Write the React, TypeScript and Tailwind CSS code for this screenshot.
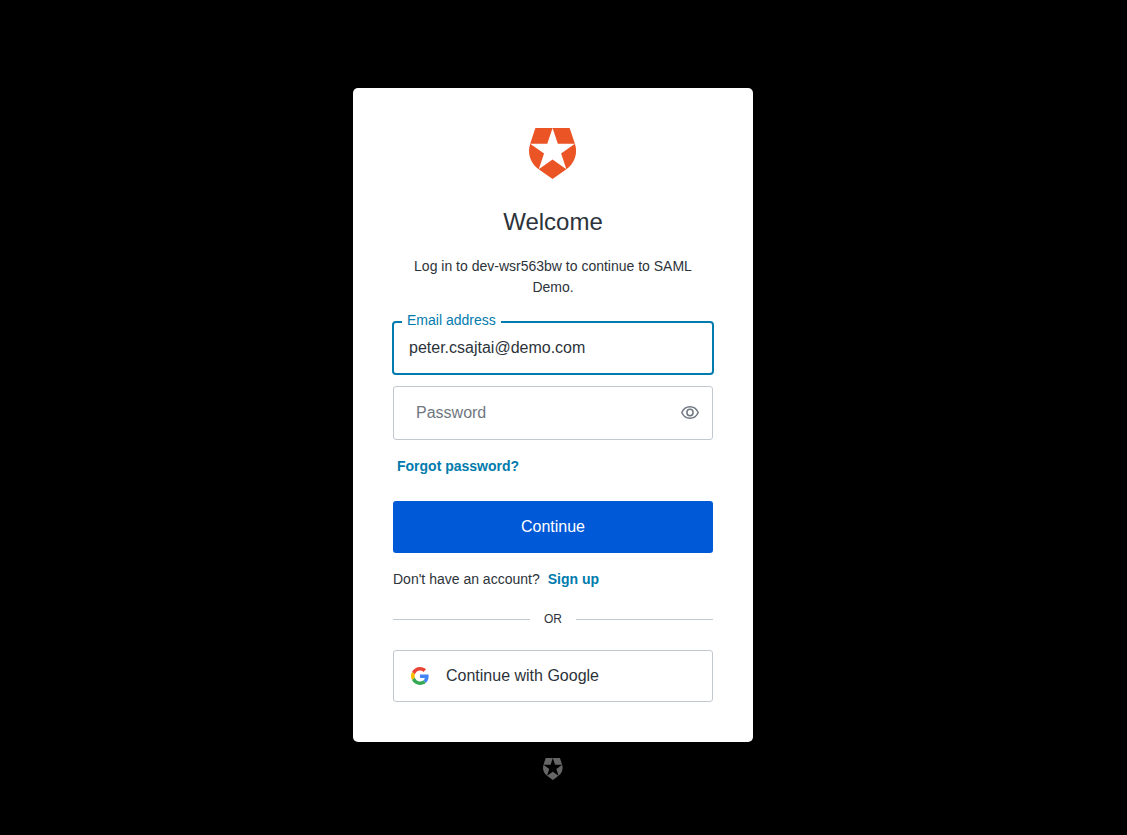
import { useState } from 'react';

interface ShieldLogoProps {
  className: string;
  label: string;
}

function ShieldLogo({ className, label }: ShieldLogoProps) {
  return (
    <svg role="img" aria-label={label} viewBox="1.5 0 21.4 24" preserveAspectRatio="none" fill="currentColor" className={className}>
      <path d="M21.98 7.448L19.62 0H4.347L2.02 7.448c-1.352 4.312.03 9.206 3.815 12.015L12.007 24l6.157-4.552c3.755-2.81 5.182-7.688 3.815-12.015l-6.16 4.58 2.343 7.45-6.157-4.597-6.158 4.58 2.358-7.433-6.188-4.55 7.63-.045L12.008 0l2.356 7.404 7.615.044z" />
    </svg>
  );
}

function GoogleIcon() {
  return (
    <svg aria-hidden="true" viewBox="0 0 48 48" className="size-[18px] shrink-0">
      <path fill="#EA4335" d="M24 9.5c3.54 0 6.71 1.22 9.21 3.6l6.85-6.85C35.9 2.38 30.47 0 24 0 14.62 0 6.51 5.38 2.56 13.22l7.98 6.19C12.43 13.72 17.74 9.5 24 9.5z" />
      <path fill="#4285F4" d="M46.98 24.55c0-1.57-.15-3.09-.38-4.55H24v9.02h12.94c-.58 2.96-2.26 5.48-4.78 7.18l7.73 6c4.51-4.18 7.09-10.36 7.09-17.65z" />
      <path fill="#FBBC05" d="M10.53 28.59c-.48-1.45-.76-2.99-.76-4.59s.27-3.14.76-4.59l-7.98-6.19C.92 16.46 0 20.12 0 24c0 3.88.92 7.54 2.56 10.78l7.97-6.19z" />
      <path fill="#34A853" d="M24 48c6.48 0 11.93-2.13 15.89-5.81l-7.73-6c-2.15 1.45-4.92 2.3-8.16 2.3-6.26 0-11.57-4.22-13.47-9.91l-7.98 6.19C6.51 42.62 14.62 48 24 48z" />
    </svg>
  );
}

function EyeIcon() {
  return (
    <svg aria-hidden="true" viewBox="0 0 18 14" fill="none" stroke="currentColor" strokeWidth="1.5" className="h-3.5 w-[18px]">
      <path d="M.8 6.500C2.500 2.700 5.500.8 9 .8s6.500 1.900 8.200 5.700C15.500 10.400 12.500 12.300 9 12.300S2.500 10.400.8 6.500z" />
      <ellipse cx="9" cy="6.500" rx="3.100" ry="3.200" />
    </svg>
  );
}

export default function App() {
  const [email, setEmail] = useState('peter.csajtai@demo.com');
  const [password, setPassword] = useState('');
  const [showPassword, setShowPassword] = useState(false);

  return (
    <div className="flex min-h-screen flex-col items-center justify-center bg-black pt-[88px] pr-[21px] pb-[55px] font-['Liberation_Sans',Arial,sans-serif] text-sm leading-[21px] text-[#2d333a]">
      <main className="w-full max-w-[400px] rounded-[5px] bg-white p-10">
        <header className="flex flex-col items-center text-center">
          <div className="h-[52px]">
            <ShieldLogo label="dev-wsr563bw" className="h-[51px] w-12 text-[#eb5424]" />
          </div>
          <h1 className="mt-6 text-2xl leading-9">Welcome</h1>
          <p className="mt-4 px-4">Log in to dev-wsr563bw to continue to SAML Demo.</p>
        </header>

        <form className="mt-[23px]" onSubmit={(e) => e.preventDefault()}>
          <div className="relative -mx-px">
            <label htmlFor="email" className="absolute -top-[11px] left-2.5 bg-white px-[5px] text-[#007bad]">
              Email address
            </label>
            <input
              id="email"
              type="email"
              value={email}
              onChange={(e) => setEmail(e.target.value)}
              className="block h-[54px] w-full rounded-[4px] border-2 border-[#007bad] px-[15px] text-base outline-none"
            />
          </div>

          <div className="relative mt-[11px]">
            <input
              id="password"
              type={showPassword ? 'text' : 'password'}
              aria-label="Password"
              placeholder="Password"
              value={password}
              onChange={(e) => setPassword(e.target.value)}
              className="block h-[54px] w-full rounded-[3px] border border-[#c2c8d0] pr-12 pl-[22px] text-base outline-none placeholder:text-[#6f7780]"
            />
            <button
              type="button"
              aria-label="Show password"
              onClick={() => setShowPassword(!showPassword)}
              className="absolute inset-y-0 right-0 flex w-[46px] items-center justify-center text-[#6f7780]"
            >
              <EyeIcon />
            </button>
          </div>

          <a href="#reset" className="mt-4 block px-1 font-bold text-[#007bad]">
            Forgot password?
          </a>

          <button type="submit" className="mt-6 h-[52px] w-full rounded-[3px] bg-[#0059d6] text-base text-white">
            Continue
          </button>
        </form>

        <p className="mt-4">
          Don't have an account?
          <a href="#signup" className="ml-2 font-bold text-[#007bad]">Sign up</a>
        </p>

        <div className="mt-5 flex items-center gap-3.5 text-xs leading-[18px]">
          <span className="h-px flex-1 bg-[#c2c8d0]" />
          OR
          <span className="h-px flex-1 bg-[#c2c8d0]" />
        </div>

        <button
          type="button"
          className="mt-[22px] flex h-[52px] w-full items-center gap-[17px] rounded-[3px] border border-[#c2c8d0] px-[17px] text-base"
        >
          <GoogleIcon />
          Continue with Google
        </button>
      </main>

      <a href="#about" className="mt-4">
        <ShieldLogo label="Auth0" className="h-[22px] w-5 text-[#666]" />
      </a>
    </div>
  );
}
